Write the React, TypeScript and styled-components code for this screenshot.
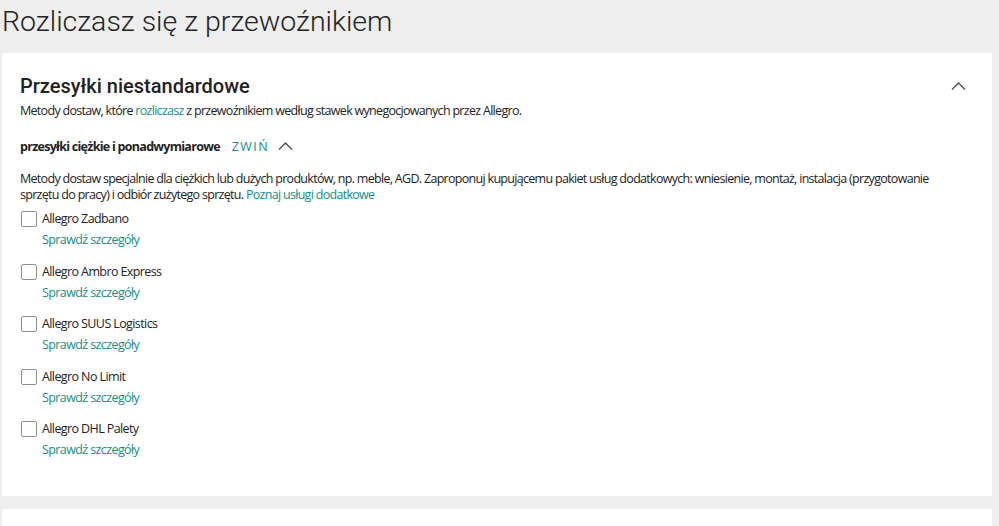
import React from "react";
import styled, { createGlobalStyle } from "styled-components";

const Global = createGlobalStyle`
  html, body { margin: 0; padding: 0; background: #eeeeee; }
  body { font-family: "Open Sans", "Liberation Sans", sans-serif; color: #222; }
  * { box-sizing: border-box; }
`;

const Page = styled.div`
  display: flex;
  flex-direction: column;
  padding: 0 7px 0 2px;
  height: 526px;
  overflow: hidden;
`;

const PageTitle = styled.h1`
  margin: 0;
  padding: 4px 0 0 0;
  height: 53px;
  flex-shrink: 0;
  font-family: Roboto, "Liberation Sans", sans-serif;
  font-weight: 300;
  font-size: 28.5px;
  line-height: 36px;
  color: #222;
`;

const Card = styled.section<{ $h?: number }>`
  background: #fff;
  padding: 20px 18px 0 18px;
  height: ${(p) => (p.$h ? `${p.$h}px` : "auto")};
  margin-bottom: 13px;
  flex-shrink: 0;
`;

const CardHeader = styled.div`
  display: flex;
  justify-content: space-between;
  align-items: flex-start;
`;

const CardTitle = styled.h2`
  margin: 0;
  font-family: Roboto, "Liberation Sans", sans-serif;
  font-weight: 500;
  font-size: 20px;
  line-height: 26px;
  color: #222;
`;

const IconButton = styled.button`
  border: 0;
  background: none;
  padding: 0;
  margin: 5px 8px 0 0;
  width: 16px;
  height: 16px;
  display: flex;
  align-items: center;
  justify-content: center;
  cursor: pointer;
`;

const Text = styled.p`
  margin: 0;
  font-size: 12.5px;
  letter-spacing: -0.7px;
  line-height: 16px;
  color: #222;
`;

const Desc = styled(Text)`
  margin-top: 4px;
`;

const Link = styled.a`
  color: #138f85;
  text-decoration: none;
  cursor: pointer;
`;

const SubHeader = styled.div`
  display: flex;
  align-items: center;
  margin-top: 18px;
  height: 18px;
`;

const SubTitle = styled.span`
  font-weight: 700;
  font-size: 12.5px;
  letter-spacing: -0.72px;
  color: #222;
`;

const Toggle = styled.button`
  border: 0;
  background: none;
  padding: 0;
  margin-left: 12px;
  display: flex;
  align-items: center;
  gap: 9px;
  font-family: "Open Sans", sans-serif;
  font-size: 12.5px;
  letter-spacing: 1.4px;
  color: #138f85;
  cursor: pointer;
`;

const SubDesc = styled(Text)`
  margin-top: 16px;
  padding-right: 24px;
`;

const List = styled.div`
  display: flex;
  flex-direction: column;
  gap: 15.5px;
  margin-top: 8px;
`;

const Item = styled.div`
  display: grid;
  grid-template-columns: 22px auto;
  row-gap: 5px;
  align-items: center;
  justify-items: start;
`;

const Box = styled.span`
  width: 16px;
  height: 16px;
  border: 1px solid #8f8f8f;
  border-radius: 2px;
  background: #fff;
  margin-left: 1px;
`;

const Label = styled(Text)`
  display: block;
  letter-spacing: -0.6px;
`;

const Details = styled(Link)`
  grid-column: 2;
  font-size: 12.5px;
  letter-spacing: -0.6px;
  line-height: 16px;
`;

const Chevron = () => (
  <svg width="15" height="10" viewBox="0 0 15 10" fill="none">
    <path d="M1 8.5 L7.5 2 L14 8.5" stroke="#555" strokeWidth="1.5" />
  </svg>
);

const carriers = [
  "Allegro Zadbano",
  "Allegro Ambro Express",
  "Allegro SUUS Logistics",
  "Allegro No Limit",
  "Allegro DHL Palety",
];

export default function App() {
  return (
    <>
      <Global />
      <Page>
        <PageTitle>Rozliczasz się z przewoźnikiem</PageTitle>
        <Card $h={443}>
          <CardHeader>
            <CardTitle>Przesyłki niestandardowe</CardTitle>
            <IconButton aria-label="zwiń">
              <Chevron />
            </IconButton>
          </CardHeader>
          <Desc>
            Metody dostaw, które <Link>rozliczasz</Link> z przewoźnikiem według
            stawek wynegocjowanych przez Allegro.
          </Desc>
          <SubHeader>
            <SubTitle>przesyłki ciężkie i ponadwymiarowe</SubTitle>
            <Toggle>
              ZWIŃ
              <Chevron />
            </Toggle>
          </SubHeader>
          <SubDesc>
            Metody dostaw specjalnie dla ciężkich lub dużych produktów, np.
            meble, AGD. Zaproponuj kupującemu pakiet usług dodatkowych:
            wniesienie, montaż, instalacja (przygotowanie sprzętu do pracy) i
            odbiór zużytego sprzętu. <Link>Poznaj usługi dodatkowe</Link>
          </SubDesc>
          <List>
            {carriers.map((c) => (
              <Item key={c}>
                <Box />
                <Label as="span">{c}</Label>
                <Details>Sprawdź szczegóły</Details>
              </Item>
            ))}
          </List>
        </Card>
        <Card $h={60} />
      </Page>
    </>
  );
}
